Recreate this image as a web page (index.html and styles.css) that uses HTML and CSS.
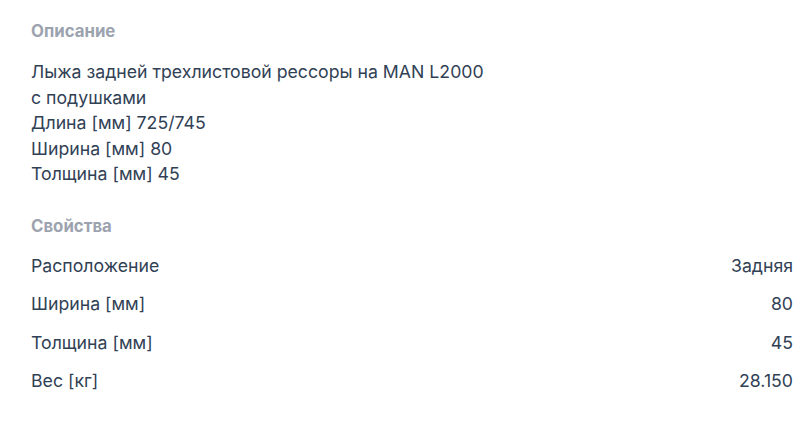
FILE: index.html
```html
<!DOCTYPE html>
<html lang="ru">
<head>
<meta charset="utf-8">
<link rel="stylesheet" href="styles.css">
</head>
<body>
<div class="page">
  <section class="section">
    <h3 class="title">Описание</h3>
    <div class="desc">
      <div>Лыжа задней трехлистовой рессоры на MAN L2000</div>
      <div>с подушками</div>
      <div>Длина [мм] 725/745</div>
      <div>Ширина [мм] 80</div>
      <div>Толщина [мм] 45</div>
    </div>
  </section>
  <section class="section props">
    <h3 class="title">Свойства</h3>
    <div class="rows">
      <div class="row"><span>Расположение</span><span>Задняя</span></div>
      <div class="row"><span>Ширина [мм]</span><span>80</span></div>
      <div class="row"><span>Толщина [мм]</span><span>45</span></div>
      <div class="row"><span>Вес [кг]</span><span>28.150</span></div>
    </div>
  </section>
</div>
</body>
</html>
```
FILE: styles.css
```css
* { box-sizing: border-box; }
html, body { margin: 0; padding: 0; background: #fff; }
body {
  font-family: Inter, "Noto Sans", sans-serif;
  font-size: 17.7px;
  color: #314155;
}
.page {
  padding: 19px 9px 0 31px;
}
.title {
  margin: 0;
  font-size: 16.8px;
  line-height: 24px;
  font-weight: 700;
  color: #9ca3af;
}
.desc {
  margin-top: 16px;
  line-height: 25.6px;
}
.props { margin-top: 27px; }
.rows { margin-top: 16px; }
.row {
  display: flex;
  justify-content: space-between;
  height: 38.5px;
  line-height: 24px;
}
```
